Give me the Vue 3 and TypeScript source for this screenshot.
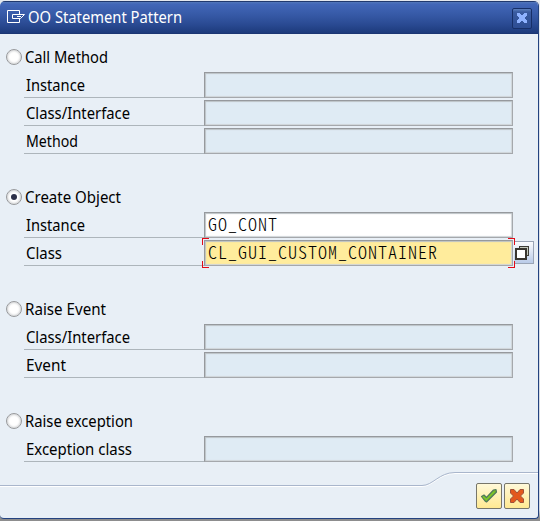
<script setup lang="ts">
interface Field {
  label: string
  value?: string
  state?: 'open' | 'focus'
  width: number
}
interface Group {
  title: string
  selected: boolean
  width: number
  fields: Field[]
}

const groups: Group[] = [
  {
    title: 'Call Method',
    selected: false,
    width: 83,
    fields: [
      { label: 'Instance', width: 59 },
      { label: 'Class/Interface', width: 104 },
      { label: 'Method', width: 52 },
    ],
  },
  {
    title: 'Create Object',
    selected: true,
    width: 96,
    fields: [
      { label: 'Instance', value: 'GO_CONT', state: 'open', width: 59 },
      { label: 'Class', value: 'CL_GUI_CUSTOM_CONTAINER', state: 'focus', width: 36 },
    ],
  },
  {
    title: 'Raise Event',
    selected: false,
    width: 81,
    fields: [
      { label: 'Class/Interface', width: 104 },
      { label: 'Event', width: 40 },
    ],
  },
  {
    title: 'Raise exception',
    selected: false,
    width: 108,
    fields: [{ label: 'Exception class', width: 106 }],
  },
]
</script>

<template>
  <div class="desktop">
    <div class="dialog">
      <header class="titlebar">
        <svg class="title-icon" width="19" height="14" viewBox="0 0 19 14" fill="none" stroke="#fff">
          <path d="M12.500 4.500V.5H.5v12h12V9" />
          <path d="M5.500 8.500v-4H17.500L13.500 8.500zM10 6.500h4" />
        </svg>
        <svg class="title-text" width="220" height="28">
          <text x="0" y="19" textLength="154" lengthAdjust="spacingAndGlyphs">OO Statement Pattern</text>
        </svg>
        <button class="close" aria-label="Close">
          <svg width="12" height="12" viewBox="0 0 12 12" shape-rendering="crispEdges">
            <path d="M1 1h3v1h1v1h2V2h1V1h3v3h-1v1H9v2h1v1h1v3H8v-1H7V9H5v1H4v1H1V8h1V7h1V5H2V4H1z" fill="#8fb2ff" />
          </svg>
        </button>
      </header>

      <main class="content">
        <section v-for="group in groups" :key="group.title" class="group">
          <div class="choice">
            <span class="radio" :class="{ selected: group.selected }"></span>
            <svg class="text" width="160" height="28">
              <text x="0" y="20" :textLength="group.width" lengthAdjust="spacingAndGlyphs">{{ group.title }}</text>
            </svg>
          </div>
          <div v-for="field in group.fields" :key="field.label" class="row">
            <div class="label">
              <svg class="text" width="160" height="26">
                <text x="0" y="19" :textLength="field.width" lengthAdjust="spacingAndGlyphs">{{ field.label }}</text>
              </svg>
            </div>
            <div class="field" :class="field.state">
              <span class="value">{{ field.value }}</span>
              <svg v-if="field.state === 'focus'" class="corners" width="313" height="30" fill="none" stroke="#e30b17" shape-rendering="crispEdges">
                <path d="M.5 7V.5H7M306 .5h6.500V7M.5 23v6.500H7M306 29.500h6.500V23" />
              </svg>
            </div>
            <button v-if="field.state === 'focus'" class="help" aria-label="Value help">
              <svg width="14" height="14" viewBox="0 0 14 14" shape-rendering="crispEdges">
                <path d="M4.500 .5h9v9h-9z" fill="#c5cabd" stroke="#3d3c36" />
                <path d="M1 3h10v10H1z" fill="#fff" stroke="#393630" stroke-width="2" />
              </svg>
            </button>
          </div>
        </section>
      </main>

      <footer class="footer">
        <svg class="divider" width="538" height="16" viewBox="0 0 538 16" fill="none">
          <path d="M0 13.500H422C433 13.500 439 .5 455 .5H538" stroke="#fff" transform="translate(0 1)" />
          <path d="M0 13.500H422C433 13.500 439 .5 455 .5H538" stroke="#a9b6cc" />
        </svg>
        <button class="action" aria-label="Continue">
          <svg width="18" height="16" viewBox="0 0 18 16">
            <path d="M1.500 8.500L4 7L6.500 9.500L13.500 2L16 1.500L16.500 4L8 12.500L6.500 14L5 13Z" fill="#6fb52c" stroke="#50795c" stroke-width="1.200" stroke-linejoin="round" />
            <path d="M3 8.500L6.500 11.500L14.500 3.500" fill="none" stroke="#7cc62b" stroke-width="1.500" />
          </svg>
        </button>
        <button class="action" aria-label="Cancel">
          <svg width="16" height="16" viewBox="0 0 16 16">
            <path d="M1.500 1.500H5L8 5L11 1.500h3.500V5L11.500 8l3 3v3.500H11L8 11l-3 3.500H1.500V11l3-3l-3-3z" fill="#e3581c" stroke="#a05038" />
          </svg>
        </button>
      </footer>
    </div>
  </div>
</template>

<style>
body {
  margin: 0;
  overflow: hidden;
}
</style>

<style scoped>
* {
  box-sizing: border-box;
}
.desktop {
  width: 540px;
  height: 521px;
  padding: 1px 1px 2px 0;
  background: linear-gradient(#e4e8ee 0, #d3d8e0 510px, #8d8d8e 518px);
  font-family: 'Noto Sans', sans-serif;
}
.dialog {
  display: flex;
  flex-direction: column;
  width: 539px;
  height: 518px;
  border: solid #234380;
  border-width: 0 1px 1px 0;
  border-radius: 5px 5px 4px 4px;
  overflow: hidden;
  background: #e8eff6;
}
.titlebar {
  display: flex;
  align-items: center;
  flex: none;
  height: 33px;
  padding: 0 6px 0 7px;
  border-top: 1px solid #20396f;
  background: linear-gradient(#5378ba 0, #4267b8 2px, #3659a6 13px, #294991 23px, #1d3a7b 31px, #19316b 32px);
}
.title-icon {
  margin-top: -2px;
}
.title-text {
  margin-left: 2px;
  font-size: 16px;
  fill: #fff;
  overflow: visible;
}
button {
  display: flex;
  align-items: center;
  justify-content: center;
  padding: 0;
}
.close {
  width: 20px;
  height: 21px;
  margin-left: auto;
  border: 1px solid #172f68;
  border-radius: 2px;
  background: linear-gradient(#5d80bd 0, #3a5ba0 3px, #2d4d94);
}
.content {
  flex: 1;
  padding-top: 9px;
}
.group + .group {
  margin-top: 28px;
}
.choice {
  display: flex;
  align-items: center;
  height: 28px;
  padding-left: 6px;
}
.radio {
  display: flex;
  align-items: center;
  justify-content: center;
  width: 16px;
  height: 16px;
  border: 1px solid #97999c;
  border-radius: 50%;
  background: #fff;
  box-shadow: inset 0 0 2px 1px #d2d3d5;
}
.radio.selected::after {
  content: '';
  width: 6px;
  height: 6px;
  border-radius: 50%;
  background: #2d3048;
}
.text {
  display: block;
  margin-left: 3px;
  font-size: 16px;
  fill: #000;
}
.row {
  display: flex;
  height: 28px;
  padding: 1px 0 1px 24px;
}
.label {
  width: 180px;
  height: 26px;
  border-bottom: 1px solid #adb5bb;
}
.label .text {
  margin-left: 2px;
}
.field {
  position: relative;
  display: flex;
  align-items: center;
  width: 309px;
  height: 26px;
  padding-left: 3px;
  border: 1px solid #96999d;
  border-right-color: #a5a8ac;
  border-bottom-color: #a5a8ac;
  background: #dfebf4;
  box-shadow: inset 1px 1px 1px #bcc2c6, inset -1px -1px 1px #d0d5d9;
}
.field.open {
  background: #fff;
}
.field.focus {
  background: #ffec9c;
}
.value {
  padding-bottom: 3px;
  color: #000;
  font-family: 'Noto Sans CJK KR', sans-serif;
  font-feature-settings: 'hwid';
  font-size: 18px;
  font-weight: 300;
  line-height: 21px;
  letter-spacing: 1px;
}
.corners {
  position: absolute;
  top: -3px;
  left: -3px;
}
.help {
  width: 20px;
  height: 23px;
  margin: 1px 0 0 1px;
  padding-right: 4px;
  border: 1px solid #9aa5b6;
  border-left: 0;
  background: linear-gradient(#fbfcfe, #b9cbe8);
}
.footer {
  position: relative;
  display: flex;
  flex: none;
  justify-content: flex-end;
  gap: 2px;
  height: 46px;
  padding: 11px 8px 0 0;
}
.divider {
  position: absolute;
  top: 0;
  left: 0;
}
.action {
  width: 26px;
  height: 26px;
  border: 1px solid #77766a;
  border-radius: 2px;
  background: linear-gradient(#fff9d9, #ffe992);
}
</style>
